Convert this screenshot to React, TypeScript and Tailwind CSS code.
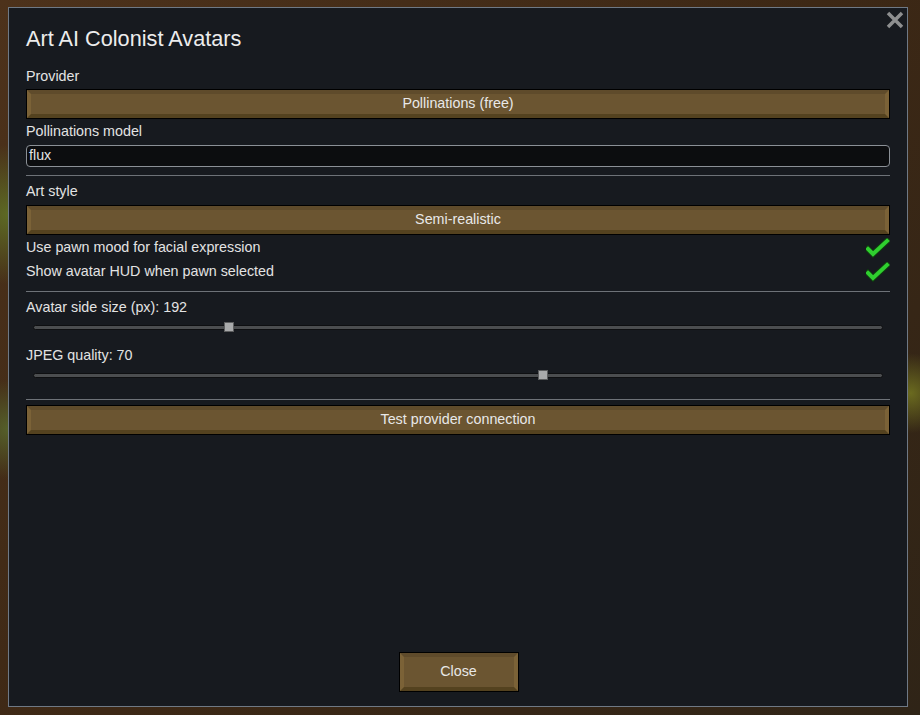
import { ReactNode } from "react";

// Bevelled brown button used throughout the settings window
function WoodButton({ children, className = "" }: { children: ReactNode; className?: string }) {
  return (
    <div className={`border border-black ${className}`}>
      <div className="h-full border-[4px] border-t-[#5f4b2b] border-b-[#54421f] border-l-[#7b6237] border-r-[#7b6237] bg-[#6b5531] flex items-center justify-center text-[14.3px] text-[#e8e8e8]">
        {children}
      </div>
    </div>
  );
}

function Divider() {
  return <div className="h-px bg-[#6e7278]" />;
}

function Check() {
  return (
    <svg width="24" height="20" viewBox="0 0 24 20" className="block">
      <polyline points="2,11 7,16 21,3" fill="none" stroke="#0f3d0f" strokeWidth="6" strokeLinecap="square" />
      <polyline points="2,11 7,16 21,3" fill="none" stroke="#2fcf2f" strokeWidth="4" strokeLinecap="square" />
    </svg>
  );
}

function Slider({ pos }: { pos: number }) {
  return (
    <div className="relative h-[12px] mx-[7px] flex items-center">
      <div className="h-[5px] w-full rounded-full bg-[#4b4d4f] border border-[#0e0f11]" />
      <div
        className="absolute top-px w-[10px] h-[10px] bg-[#a9aaab] border border-[#5c5d5e]"
        style={{ left: pos }}
      />
    </div>
  );
}

function CheckRow({ label }: { label: string }) {
  return (
    <div className="h-[24px] flex items-center justify-between">
      <span>{label}</span>
      <Check />
    </div>
  );
}

export default function App() {
  return (
    <div
      className="w-[920px] h-[715px] pt-[7px] pl-[8px] overflow-hidden bg-[#402c18]"
      style={{
        backgroundImage:
          "radial-gradient(circle at 1% 30%, #5d6a24 0, transparent 70px), radial-gradient(circle at 1% 60%, #55602a 0, transparent 50px), radial-gradient(circle at 99% 55%, #6a6a1f 0, transparent 40px), linear-gradient(135deg, #4d321b, #3d2815 50%, #2f2417)",
      }}
    >
      <div className="relative w-[900px] h-[700px] border border-[#6f7985] bg-[#171a1f] px-[17px] pt-[18px] text-[14.3px] text-[#e3e3e3] [font-family:'Liberation_Sans',Arial,sans-serif] flex flex-col">
        {/* close glyph */}
        <svg width="20" height="20" viewBox="0 0 20 20" className="absolute top-[2px] right-[2px]">
          <path d="M3 3 L17 17 M17 3 L3 17" stroke="#8e8f90" strokeWidth="3.5" />
        </svg>

        <div className="text-[21.7px] leading-[26px] text-[#ececec]">Art AI Colonist Avatars</div>

        <div className="mt-[14px] leading-[20px]">Provider</div>
        <WoodButton className="mt-[3px] h-[30px]">Pollinations (free)</WoodButton>

        <div className="mt-[2px] leading-[20px]">Pollinations model</div>
        <div className="mt-[4px] h-[22px] rounded-[4px] border border-[#8b9096] bg-[#0c0d0f] px-[2px] flex items-center">flux</div>

        <div className="mt-[8px]"><Divider /></div>

        <div className="mt-[5px] leading-[20px]">Art style</div>
        <WoodButton className="mt-[4px] h-[30px]">Semi-realistic</WoodButton>

        <div className="mt-[1px]">
          <CheckRow label="Use pawn mood for facial expression" />
          <CheckRow label="Show avatar HUD when pawn selected" />
        </div>

        <div className="mt-[7px]"><Divider /></div>

        <div className="mt-[5px] leading-[20px]">Avatar side size (px): 192</div>
        <div className="mt-[4px]"><Slider pos={191} /></div>

        <div className="mt-[12px] leading-[20px]">JPEG quality: 70</div>
        <div className="mt-[4px]"><Slider pos={505} /></div>

        <div className="mt-[18px]"><Divider /></div>
        <WoodButton className="mt-[5px] h-[30px]">Test provider connection</WoodButton>

        <div className="mt-auto mb-[14px] flex justify-center">
          <WoodButton className="w-[120px] h-[40px] ml-[1px]">Close</WoodButton>
        </div>
      </div>
    </div>
  );
}
